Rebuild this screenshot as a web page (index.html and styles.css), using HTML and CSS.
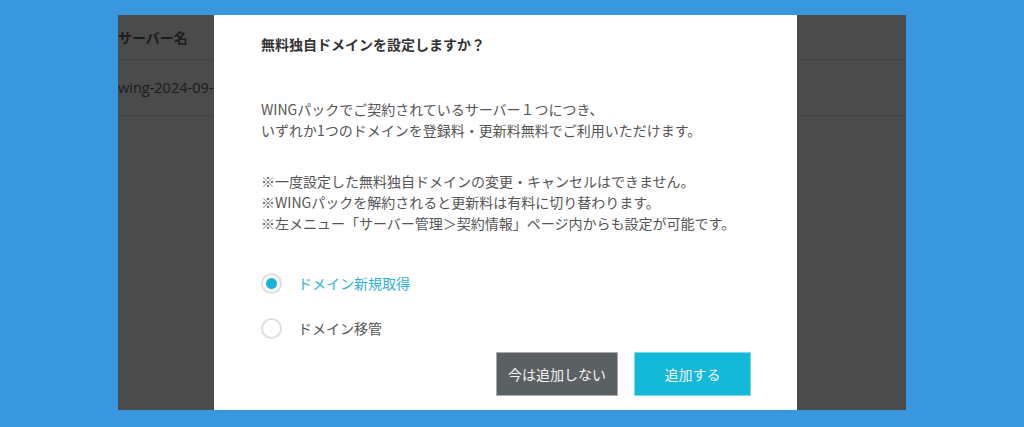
FILE: index.html
```html
<!DOCTYPE html>
<html lang="ja">
<head>
<meta charset="utf-8">
<title>無料独自ドメイン</title>
<link rel="stylesheet" href="styles.css">
</head>
<body>
<div class="stage">
  <div class="panel">
    <div class="table">
      <div class="row head"><span class="cell">サーバー名</span></div>
      <div class="row"><span class="cell mono">wing-2024-09-01-0000</span></div>
    </div>
    <div class="modal">
      <h2 class="title">無料独自ドメインを設定しますか？</h2>
      <p class="text first">WINGパックでご契約されているサーバー１つにつき、<br>いずれか1つのドメインを登録料・更新料無料でご利用いただけます。</p>
      <p class="text second">※一度設定した無料独自ドメインの変更・キャンセルはできません。<br>※WINGパックを解約されると更新料は有料に切り替わります。<br>※左メニュー「サーバー管理＞契約情報」ページ内からも設定が可能です。</p>
      <div class="options">
        <label class="option checked"><span class="radio"><span class="dot"></span></span><span class="label">ドメイン新規取得</span></label>
        <label class="option"><span class="radio"></span><span class="label">ドメイン移管</span></label>
      </div>
      <div class="actions">
        <button class="btn secondary">今は追加しない</button>
        <button class="btn primary">追加する</button>
      </div>
    </div>
  </div>
</div>
</body>
</html>
```

FILE: styles.css
```css
html, body {
  margin: 0;
  padding: 0;
}
body {
  background: #3997dd;
  font-family: "Noto Sans CJK JP", "Noto Sans", sans-serif;
  width: 1024px;
  height: 427px;
  overflow: hidden;
}
.stage {
  padding: 15px 0 0 118px;
}
.panel {
  position: relative;
  width: 788px;
  height: 395px;
  background: #4b4b4b;
  overflow: hidden;
}
.table {
  display: flex;
  flex-direction: column;
}
.row {
  height: 55px;
  border-bottom: 1px solid #424242;
  display: flex;
  align-items: center;
  color: #1c1c1c;
  font-size: 14px;
  white-space: nowrap;
}
.row.head {
  height: 44px;
  font-weight: bold;
}
.cell.mono {
  font-family: "Open Sans", "Noto Sans", sans-serif;
  font-size: 14.5px;
}
.modal {
  position: absolute;
  left: 96px;
  top: 0;
  width: 583px;
  height: 395px;
  box-sizing: border-box;
  background: #fff;
  padding: 19px 46px 14px 47px;
  display: flex;
  flex-direction: column;
}
.title {
  margin: 0;
  font-size: 14px;
  line-height: 21px;
  font-weight: bold;
  color: #333;
}
.text {
  margin: 0;
  font-size: 14px;
  line-height: 21px;
  color: #555;
  white-space: nowrap;
}
.text.first {
  margin-top: 44px;
}
.text.second {
  margin-top: 30px;
}
.options {
  margin-top: 37px;
  display: flex;
  flex-direction: column;
  gap: 21px;
}
.option {
  display: flex;
  align-items: center;
  height: 24px;
  gap: 16px;
  font-size: 14px;
  color: #555;
}
.option.checked .label {
  color: #2fb3d9;
}
.radio {
  width: 21px;
  height: 21px;
  box-sizing: border-box;
  border: 2px solid #e0e0e0;
  border-radius: 50%;
  display: flex;
  align-items: center;
  justify-content: center;
  background: #fff;
}
.dot {
  width: 11px;
  height: 11px;
  border-radius: 50%;
  background: #14b5d8;
}
.actions {
  margin-top: auto;
  display: flex;
  justify-content: flex-end;
  gap: 16px;
}
.btn {
  height: 44px;
  border: 1px solid transparent;
  font-family: inherit;
  font-size: 14px;
  color: #f4f4f4;
  padding: 0;
}
.btn.secondary {
  width: 122px;
  background: #5b6163;
  border-color: #a7abad;
}
.btn.primary {
  width: 117px;
  background: #13b9d8;
  border-color: #7fd8ea;
}
```
